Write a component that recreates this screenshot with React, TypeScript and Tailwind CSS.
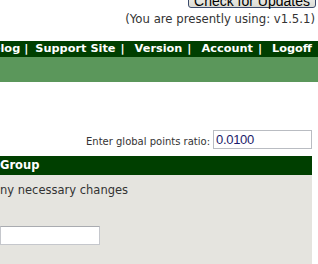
export default function App() {
  const links = ["Changelog", "Support Site", "Version", "Account", "Logoff"];

  return (
    <div className="w-[318px] h-[264px] overflow-hidden bg-white font-['DejaVu_Sans',Verdana,sans-serif]">
      {/* top area */}
      <div className="h-[41px] flex flex-col items-end pr-[3px]">
        <button className="-mt-[14px] mr-[-1px] h-[22px] w-[128px] rounded-[3px] border border-[#3b4a6b] bg-gradient-to-b from-[#fdfdfd] to-[#dcdcd4] pt-[7px] text-[14px] text-black font-['Liberation_Sans',Arial,sans-serif] leading-[14px] whitespace-nowrap">
          Check for Updates
        </button>
        <div className="mt-[4px] text-[11.7px] leading-[14px] text-[#333]">
          (You are presently using: v1.5.1)
        </div>
      </div>

      {/* nav */}
      <div className="h-[16px] bg-[#003f00] flex justify-end items-center overflow-hidden pr-[6px]">
        <div className="whitespace-nowrap text-[11.3px] leading-[16px] font-bold text-white">
          {links.map((l, i) => (
            <span key={l}>
              {i === 1 && <span className="pl-[4px] pr-[7px]">|</span>}
              {i > 1 && <span className="pl-[5px] pr-[10px]">|</span>}
              {l}
            </span>
          ))}
        </div>
      </div>
      <div className="h-[25px] bg-[#5b975b]"></div>

      {/* points ratio */}
      <div className="h-[74px] w-[312px] flex justify-end items-end pb-[7px]">
        <label className="text-[10px] text-[#333] mr-[3px]">
          Enter global points ratio:
        </label>
        <input
          defaultValue="0.0100"
          className="w-[99px] h-[19px] border border-[#b9bcc2] px-[2px] text-[13px] tracking-[-0.3px] text-[#1c1c6b] font-['Liberation_Sans',Arial,sans-serif] outline-none"
        />
      </div>

      {/* group panel */}
      <div className="w-[312px] overflow-hidden">
        <div className="h-[19px] bg-[#003f00] flex items-center justify-end overflow-hidden">
          <div className="w-[312px] shrink-0 text-[11.5px] font-bold text-white whitespace-nowrap">Group</div>
        </div>
        <div className="bg-[#e5e4df] h-[89px] flex flex-col">
          <div className="mt-[8px] text-[11.5px] leading-[15px] text-[#333] whitespace-nowrap">
            ny necessary changes
          </div>
          <input className="mt-[28px] w-[100px] h-[19px] bg-white border border-[#c5c7cc] border-t-[#a9abb0] outline-none" />
        </div>
      </div>
    </div>
  );
}
